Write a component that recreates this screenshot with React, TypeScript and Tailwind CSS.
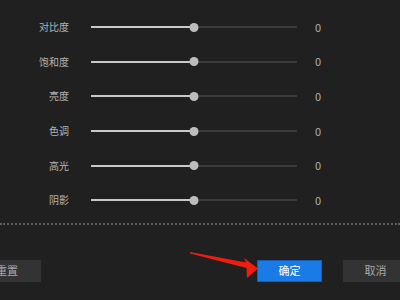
import React from 'react';

const ROWS = ['对比度', '饱和度', '亮度', '色调', '高光', '阴影'];

function SliderRow({ label }: { label: string }) {
  return (
    <div className="flex h-[34.6px] items-center">
      <div className="w-[69px] text-right text-[10px] leading-none text-[#b4b4b4]">{label}</div>
      <div className="relative ml-[22px] flex h-[9px] w-[206px] items-center">
        <div className="h-[2px] w-1/2 bg-[#c9c9c9]" />
        <div className="h-[2px] flex-1 bg-[#3a3a3a]" />
        <div className="absolute left-1/2 top-0 h-[9px] w-[9px] -translate-x-1/2 rounded-full bg-[#bdbdbd]" />
      </div>
      <div className="ml-[18px] text-[11px] leading-none text-[#b0b0b0]">0</div>
    </div>
  );
}

export default function App() {
  return (
    <div
      className="relative h-[300px] w-[400px] overflow-hidden bg-[#202020]"
      style={{ fontFamily: '"Noto Sans CJK SC", "Liberation Sans", sans-serif' }}
    >
      <div className="pt-[10px]">
        {ROWS.map((r) => (
          <SliderRow key={r} label={r} />
        ))}
      </div>
      <div className="mt-[5px] border-t-[2px] border-dotted border-[#5e5e5e]" />
      <div className="ml-[-27px] mt-[35px] flex h-[22px] text-[11px]">
        <button className="flex h-[22px] w-[68px] shrink-0 items-center justify-center bg-[#333333] text-[#a8a8a8]">
          重置
        </button>
        <button className="ml-[216px] flex h-[22px] w-[65px] shrink-0 items-center justify-center border border-[#155fb8] bg-[#1b7be6] text-white">
          确定
        </button>
        <button className="ml-[21px] flex h-[22px] w-[65px] shrink-0 items-center justify-center bg-[#333333] text-[#a8a8a8]">
          取消
        </button>
      </div>
      <svg className="pointer-events-none absolute left-0 top-0" width="400" height="300" viewBox="0 0 400 300">
        <polygon points="190,252 246,262.5 244,258 258,268.5 247,278 246.5,268 190,253.5" fill="#f01c10" />
      </svg>
    </div>
  );
}
